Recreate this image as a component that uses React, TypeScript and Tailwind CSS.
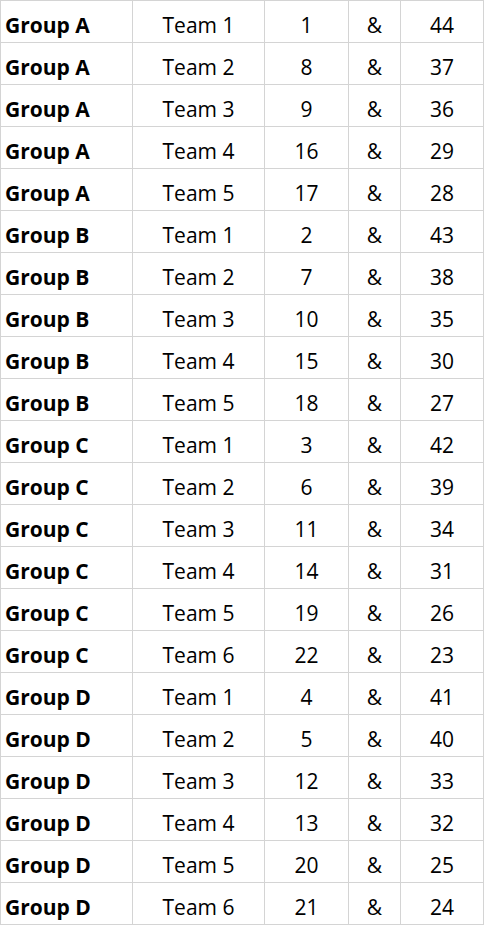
const rows: [string, string, number, number][] = [
  ["Group A", "Team 1", 1, 44],
  ["Group A", "Team 2", 8, 37],
  ["Group A", "Team 3", 9, 36],
  ["Group A", "Team 4", 16, 29],
  ["Group A", "Team 5", 17, 28],
  ["Group B", "Team 1", 2, 43],
  ["Group B", "Team 2", 7, 38],
  ["Group B", "Team 3", 10, 35],
  ["Group B", "Team 4", 15, 30],
  ["Group B", "Team 5", 18, 27],
  ["Group C", "Team 1", 3, 42],
  ["Group C", "Team 2", 6, 39],
  ["Group C", "Team 3", 11, 34],
  ["Group C", "Team 4", 14, 31],
  ["Group C", "Team 5", 19, 26],
  ["Group C", "Team 6", 22, 23],
  ["Group D", "Team 1", 4, 41],
  ["Group D", "Team 2", 5, 40],
  ["Group D", "Team 3", 12, 33],
  ["Group D", "Team 4", 13, 32],
  ["Group D", "Team 5", 20, 25],
  ["Group D", "Team 6", 21, 24],
];

const cell = "h-[42px] border-r border-b border-[#d4d4d4] flex items-end pb-[6px] leading-none";

export default function App() {
  return (
    <div className="bg-white w-[485px] h-[925px] text-[21px] text-black font-['Open_Sans',sans-serif]">
      <div className="grid grid-cols-[132px_132px_84px_52px_83px] border-l border-t border-[#d4d4d4] w-fit">
        {rows.map(([g, t, a, b], i) => (
          <div key={i} className="contents">
            <div className={`${cell} pl-[4px] font-bold`}>{g}</div>
            <div className={`${cell} justify-center`}>{t}</div>
            <div className={`${cell} justify-center`}>{a}</div>
            <div className={`${cell} justify-center`}>&amp;</div>
            <div className={`${cell} justify-center`}>{b}</div>
          </div>
        ))}
      </div>
    </div>
  );
}
